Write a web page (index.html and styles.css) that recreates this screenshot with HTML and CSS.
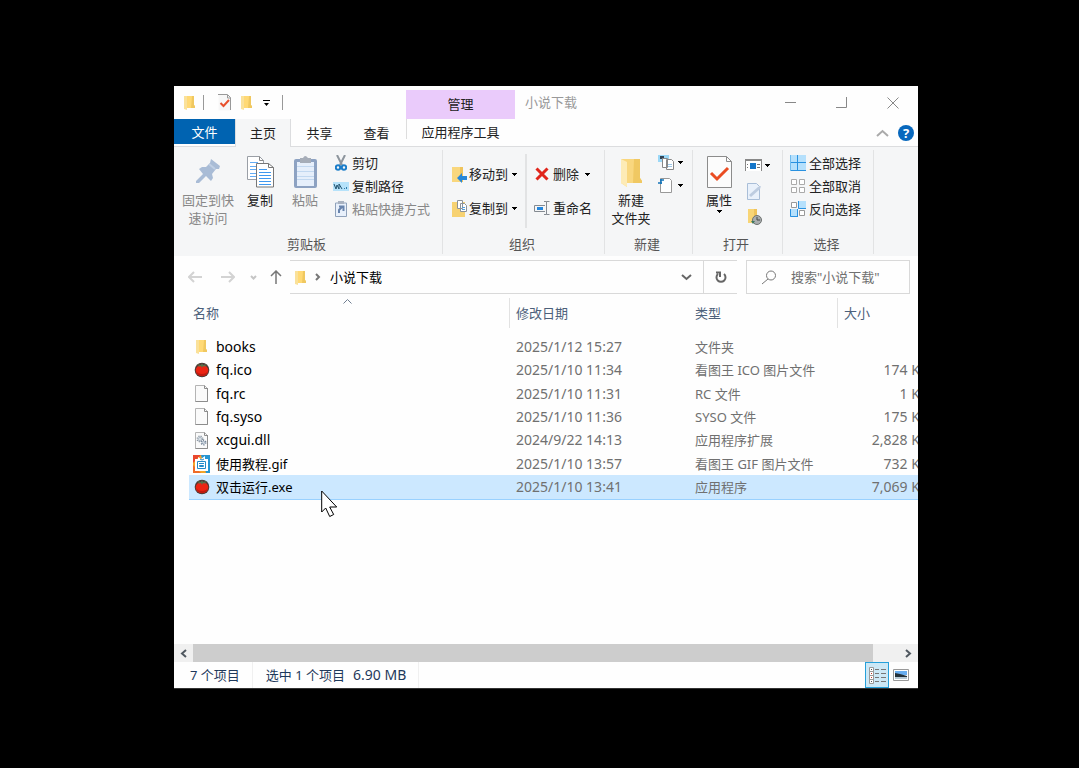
FILE: index.html
```html
<!DOCTYPE html>
<html lang="zh-CN">
<head>
<meta charset="utf-8">
<title>小说下载</title>
<link rel="stylesheet" href="styles.css">
</head>
<body>
<svg class="defs" aria-hidden="true">
  <symbol id="folder" viewBox="0 0 11 15"><path d="M0 1h10v9l1 1v2H3v2l-3-1z" fill="#fae19a"/><path d="M3 1h5v12H3z" fill="#ffd975"/><path d="M8 1h2v9l1 1v2H7z" fill="#f0c860"/></symbol>
  <symbol id="page" viewBox="0 0 13 17"><path d="M.5.5h9l3 3v13H.5z" fill="#fafafa" stroke="#b4b4b4"/><path d="M12.5 3v13.500H.5M9.500.5v3h3" fill="none" stroke="#8c8c8c"/></symbol>
  <symbol id="tomato" viewBox="0 0 16 16"><circle cx="8" cy="8" r="7.300" fill="#4d3936"/><ellipse cx="8" cy="8.500" rx="6.300" ry="5.800" fill="#ec2413"/><path d="M2 9q1 5 6 5t6-5q-2 3-6 3T2 9" fill="#bf1b10"/><path d="M8 1l1 2 4-1-2 2 1 1-3-1-1 2-1-2-3 1 1-1-2-2 4 1z" fill="#56724b"/></symbol>
  <symbol id="drop" viewBox="0 0 5 3"><path d="M0 0h5v1H4v1H3v1H2V2H1V1H0z" fill="#000"/></symbol>
</svg>
<main class="window">
  <header class="titlebar">
    <div class="quick">
      <svg class="folder-s"><use href="#folder"/></svg>
      <span class="bar"></span>
      <button class="plain q-check" aria-label="属性"><svg width="13" height="17" viewBox="0 0 13 17"><path d="M.5.5h9l3 3v13H.5z" fill="#f7f7f7"/><path d="M0 .5h9.500l3 3V16M9.500 1v3h3" fill="none" stroke="#999"/><path d="M2.500 9l3 3L11 6" fill="none" stroke="#e8502c" stroke-width="2"/></svg></button>
      <button class="plain q-folder" aria-label="新建文件夹"><svg class="folder-s"><use href="#folder"/></svg></button>
      <button class="plain q-more" aria-label="自定义快速访问工具栏"><svg width="7" height="6" viewBox="0 0 7 6"><path d="M0 0h7v1H0zM1 3h5L3.500 6z"/></svg></button>
      <span class="bar"></span>
    </div>
    <div class="context">管理</div>
    <h1>小说下载</h1>
    <div class="controls">
      <button class="plain" aria-label="最小化"><svg width="12" height="12"><path d="M0 5.500h11" stroke="#888"/></svg></button>
      <button class="plain" aria-label="最大化"><svg width="12" height="12"><path d="M10.500 0v10.500H0" fill="none" stroke="#888"/></svg></button>
      <button class="plain" aria-label="关闭"><svg width="12" height="12"><path d="M.5.5l11 11M11.500.5l-11 11" stroke="#888"/></svg></button>
    </div>
  </header>
  <nav class="tabs">
    <button class="tab file">文件</button>
    <button class="tab active">主页</button>
    <button class="tab">共享</button>
    <button class="tab">查看</button>
    <button class="tab tools">应用程序工具</button>
    <span class="tab-end">
      <button class="plain" aria-label="折叠功能区"><svg width="13" height="8"><path d="M1 7l5.500-5L12 7" fill="none" stroke="#aaa" stroke-width="2"/></svg></button>
      <button class="plain help" aria-label="帮助">?</button>
    </span>
  </nav>
  <section class="ribbon">
    <div class="group">
      <div class="tools-row clip">
        <button class="big pin off"><svg width="24" height="24" viewBox="0 0 24 24"><path d="M15 0l9 7-1 3-3 0-4 5 1 4-2 3-5-5-7 7-3 0 0-2 7-7-4-5 3-2 4 0 4-4z" fill="#a9bcd6"/><path d="M13 5l6 5" stroke="#c0cfe4" stroke-width="2"/></svg><span>固定到快<br>速访问</span></button>
        <button class="big"><svg width="27" height="32" viewBox="0 0 27 32"><path d="M.5.5h12l4 4v19H.5z" fill="#fff" stroke="#9a9fa6"/><path d="M12.500.5v4h4" fill="none" stroke="#888"/><path d="M3 6.500h8M3 10.500h7M3 13.500h7M3 17.500h7M3 20.500h7" stroke="#62acf5"/><path d="M9.500 7.500h12l5 4v19.500h-17z" fill="#fff" stroke="#777"/><path d="M21.500 7.500v4h5" fill="none" stroke="#777"/><path d="M12 13.500h8M12 16.500h12M12 19.500h12M12 22.500h12M12 25.500h12M12 28.500h12" stroke="#3f98ef"/></svg><span>复制</span></button>
        <button class="big paste off"><svg width="23" height="33" viewBox="0 0 23 33"><rect y="3" width="23" height="29" rx="2" fill="#8da2c2"/><path d="M3 6h17v24H3z" fill="#e6effb"/><path d="M6 2h3q2-4 5 0h3v5H6z" fill="#a6adb8"/><path d="M3 10.500h17M3 15.500h17M3 20.500h17M3 23.500h17" stroke="#c2d8f0"/></svg><span>粘贴</span></button>
        <div class="stack">
          <button class="small"><span class="ico"><svg width="12" height="16" viewBox="0 0 12 16"><path d="M2 0l5 10M10 0L5 10" stroke="#8d959d" stroke-width="2"/><circle cx="3" cy="12.500" r="2.200" fill="none" stroke="#1b7dc9" stroke-width="2"/><circle cx="9" cy="12.500" r="2.200" fill="none" stroke="#1b7dc9" stroke-width="2"/></svg></span>剪切</button>
          <button class="small"><span class="ico"><svg width="16" height="9" viewBox="0 0 16 9"><path d="M0 0h16v9H0z" fill="#b6e2fa"/><path d="M1 2l2 5 1-4 2 4V2l3 5" fill="none" stroke="#20526f"/><path d="M11 6h1v1h-1zM13 5h1v2h-1z" fill="#317caa"/></svg></span>复制路径</button>
          <button class="small off"><span class="ico"><svg width="12" height="16" viewBox="0 0 12 16"><path d="M.5 2h11v13.500H.5z" fill="#e8f0fb" stroke="#8fa1ba"/><path d="M3 0h6v3H3z" fill="#a9b2c0"/><path d="M4 12V9l3-3M4 5.500h4.500V10" fill="none" stroke="#6984ad" stroke-width="2"/></svg></span>粘贴快捷方式</button>
        </div>
      </div>
      <h2>剪贴板</h2>
    </div>
    <div class="group">
      <div class="tools-row organize">
        <div class="pair">
          <button class="small"><span class="ico"><svg width="16" height="17" viewBox="0 0 16 17"><path d="M0 1h11v15H0z" fill="#f9d77d"/><path d="M8 1h3v15H8z" fill="#efc45c"/><path d="M5 12l5-5v3h5v4h-5v3z" fill="#2687d9"/></svg></span>移动到<svg class="drop"><use href="#drop"/></svg></button>
          <button class="small"><span class="ico"><svg width="16" height="17" viewBox="0 0 16 17"><path d="M0 2h13v15H0z" fill="#f7d272"/><path d="M5.500.5h5v8h-5zM8.500 3.500h4l2 2v6h-6z" fill="#fff" stroke="#8c9299"/><path d="M10 7.500h3M10 9.500h3" stroke="#559eda"/></svg></span>复制到<svg class="drop"><use href="#drop"/></svg></button>
        </div>
        <div class="pair second">
          <button class="small"><span class="ico"><svg width="14" height="14" viewBox="0 0 14 14"><path d="M1.500 1.500l11 11M12.500 1.500l-11 11" stroke="#e0251b" stroke-width="3"/></svg></span>删除<svg class="drop"><use href="#drop"/></svg></button>
          <button class="small"><span class="ico"><svg width="16" height="15" viewBox="0 0 16 15"><path d="M11 4.500H.5v6H11M10 .5h2.500v13H10M15.500.5h-3M15.500 13.500h-3" fill="none" stroke="#848a91"/><path d="M3 6h6v3H3z" fill="#2587de"/></svg></span>重命名</button>
        </div>
      </div>
      <h2>组织</h2>
    </div>
    <div class="group">
      <div class="tools-row create">
        <button class="big"><svg width="21" height="30" viewBox="0 0 21 30"><path d="M0 1h19v19l2 3v2H6v4L0 25z" fill="#f9d77f"/><path d="M0 1l6 3v25L0 25z" fill="#fdebb6"/><path d="M13 1h6v19l2 3v2h-9z" fill="#f0c862"/></svg><span>新建<br>文件夹</span></button>
        <div class="icons">
          <button class="plain" aria-label="新建项目"><svg width="17" height="17" viewBox="0 0 17 17"><path d="M0 1h11v7H0z" fill="#9bd8f7"/><path d="M2 2h4v3H2z" fill="#345"/><path d="M4.500 4.500h5v9h-5zM8.500 5.500h5l2 2v8h-7z" fill="#fff" stroke="#888"/><path d="M10 10.500h4M10 12.500h4" stroke="#9cc7e9"/></svg><svg class="drop"><use href="#drop"/></svg></button>
          <button class="plain" aria-label="轻松访问"><svg width="17" height="17" viewBox="0 0 17 17"><path d="M2.500 1.500h9l2 2v12h-11z" fill="#fff" stroke="#999"/><path d="M0 6h4M2 3h4M3 2v5" stroke="#1675b9" stroke-width="1.500"/></svg><svg class="drop"><use href="#drop"/></svg></button>
        </div>
      </div>
      <h2>新建</h2>
    </div>
    <div class="group">
      <div class="tools-row open">
        <button class="big"><svg width="25" height="32" viewBox="0 0 25 32"><path d="M.5.5h19l5 5v26H.5z" fill="#fcfcfc" stroke="#8c8c8c"/><path d="M19.500.5v5h5" fill="none" stroke="#8c8c8c"/><path d="M4 17l6 6 11-11" fill="none" stroke="#ea4c22" stroke-width="3"/></svg><span>属性</span><svg class="drop"><use href="#drop"/></svg></button>
        <div class="icons">
          <button class="plain" aria-label="打开"><svg width="17" height="13" viewBox="0 0 17 13"><path d="M.5 12V.5h16V12" fill="#fff" stroke="#888"/><path d="M0 1h17" stroke="#888" stroke-width="2"/><path d="M5 4h6v6H5z" fill="#1576c9"/><path d="M2 5h1v1H2zM2 8h1v1H2zM12 5h3v1h-3zM12 8h3v1h-3z" fill="#777"/></svg><svg class="drop"><use href="#drop"/></svg></button>
          <button class="plain" aria-label="编辑"><svg width="17" height="17" viewBox="0 0 17 17"><path d="M2.500.5h9l3 3v13h-12z" fill="#e9f1fb" stroke="#a9bed8"/><path d="M4 12L13 4l3-1-1 3-9 8z" fill="#bdcce0"/></svg></button>
          <button class="plain" aria-label="历史记录"><svg width="17" height="17" viewBox="0 0 17 17"><path d="M3 0h9v14H3z" fill="#f8d576"/><path d="M9 0h3v14H9z" fill="#efc35b"/><circle cx="12" cy="11" r="4.500" fill="#a9adae" stroke="#6d7270"/><path d="M12 8v3h3" fill="none" stroke="#444a4a"/><path d="M6 12h4l-2 3z" fill="#3f7860"/></svg></button>
        </div>
      </div>
      <h2>打开</h2>
    </div>
    <div class="group">
      <div class="tools-row select">
        <div class="stack">
          <button class="small"><span class="ico"><svg width="16" height="16" viewBox="0 0 16 16"><path d="M0 0h16v16H0z" fill="#b5e0fc"/><path d="M0 7.500h16M7.500 0v16M0 15.500h16" stroke="#2991e0"/><path d="M.5 0v16" stroke="#70bbef"/></svg></span>全部选择</button>
          <button class="small"><span class="ico"><svg width="16" height="16" viewBox="0 0 16 16"><path d="M1.500 1.500h5v5h-5zM9.500 1.500h5v5h-5zM1.500 9.500h5v5h-5zM9.500 9.500h5v5h-5z" fill="#fff" stroke="#aaa"/></svg></span>全部取消</button>
          <button class="small"><span class="ico"><svg width="16" height="16" viewBox="0 0 16 16"><path d="M1.500 1.500h5v5h-5zM9.500 9.500h5v5h-5z" fill="#fff" stroke="#999"/><path d="M8 0h8v8H8zM0 8h8v8H0z" fill="#b5e0fc"/><path d="M8.500 0v7.500H16M.5 8v7.500H8M7.500 8v8" fill="none" stroke="#2991e0"/></svg></span>反向选择</button>
        </div>
      </div>
      <h2>选择</h2>
    </div>
  </section>
  <section class="navigate">
    <div class="arrows">
      <button class="plain" aria-label="后退"><svg width="14" height="12"><path d="M14 6H1M6 1L1 6l5 5" fill="none" stroke="#d3d3d3" stroke-width="2"/></svg></button>
      <button class="plain" aria-label="前进"><svg width="14" height="12"><path d="M0 6h13M8 1l5 5-5 5" fill="none" stroke="#d3d3d3" stroke-width="2"/></svg></button>
      <button class="plain" aria-label="最近位置"><svg width="7" height="5"><path d="M1 1l2.500 2.500L6 1" fill="none" stroke="#c5c5c5" stroke-width="2"/></svg></button>
      <button class="plain" aria-label="向上"><svg width="12" height="14"><path d="M6 14V1M1 6l5-5 5 5" fill="none" stroke="#777" stroke-width="1.500"/></svg></button>
    </div>
    <div class="address">
      <svg class="folder-s"><use href="#folder"/></svg>
      <svg width="6" height="8"><path d="M1 1l3 3-3 3" fill="none" stroke="#777" stroke-width="2"/></svg>
      <button class="plain crumb">小说下载</button>
      <button class="plain expand" aria-label="展开地址"><svg width="11" height="7"><path d="M1 1l4.500 4L10 1" fill="none" stroke="#666" stroke-width="2"/></svg></button>
      <button class="plain refresh" aria-label="刷新"><svg width="12" height="13" viewBox="0 0 12 13"><path d="M3 3a4.500 4.500 0 1 0 6 0M1 1.500h4V6" fill="none" stroke="#666" stroke-width="2"/></svg></button>
    </div>
    <label class="search"><svg width="15" height="15"><circle cx="9" cy="5.500" r="4.500" fill="none" stroke="#777"/><path d="M6 9l-6 5" stroke="#777"/></svg><input type="search" aria-label="搜索" placeholder='搜索"小说下载"'></label>
  </section>
  <section class="listing">
    <table>
      <colgroup><col><col class="c-date"><col class="c-type"><col class="c-size"></colgroup>
      <thead><tr><th><div>名称<svg class="sort" width="9" height="5"><path d="M.5 4.500l4-4 4 4" fill="none" stroke="#6f7e91"/></svg></div></th><th><div>修改日期</div></th><th><div>类型</div></th><th><div>大小</div></th></tr></thead>
      <tbody>
        <tr><td><span class="name latin"><span class="file-ico"><svg class="folder-s"><use href="#folder"/></svg></span>books</span></td><td>2025/1/12 15:27</td><td>文件夹</td><td></td></tr>
        <tr><td><span class="name latin"><span class="file-ico"><svg width="16" height="16"><use href="#tomato"/></svg></span>fq.ico</span></td><td>2025/1/10 11:34</td><td>看图王 ICO 图片文件</td><td>174 KB</td></tr>
        <tr><td><span class="name latin"><span class="file-ico"><svg width="13" height="17"><use href="#page"/></svg></span>fq.rc</span></td><td>2025/1/10 11:31</td><td>RC 文件</td><td>1 KB</td></tr>
        <tr><td><span class="name latin"><span class="file-ico"><svg width="13" height="17"><use href="#page"/></svg></span>fq.syso</span></td><td>2025/1/10 11:36</td><td>SYSO 文件</td><td>175 KB</td></tr>
        <tr><td><span class="name latin"><span class="file-ico"><svg width="13" height="17" viewBox="0 0 13 17"><use href="#page" width="13" height="17"/><circle cx="5" cy="7" r="2.500" fill="#d5dde5" stroke="#87929e" stroke-width="2" stroke-dasharray="1 1"/><circle cx="8.500" cy="10.500" r="2" fill="#d5dde5" stroke="#77879a" stroke-width="2" stroke-dasharray="1 1"/></svg></span>xcgui.dll</span></td><td>2024/9/22 14:13</td><td>应用程序扩展</td><td>2,828 KB</td></tr>
        <tr><td><span class="name"><span class="file-ico"><svg width="17" height="18" viewBox="0 0 17 18"><rect width="17" height="18" rx="1" fill="#f4a52a"/><path d="M0 0h8L0 8z" fill="#e9472d"/><path d="M8 0h9v18h-4z" fill="#2695d2"/><path d="M0 18v-8l8 8z" fill="#ef6c29"/><path d="M2 4h3V2l3 2 4-3v3h3v12H2z" fill="#fff"/><path d="M4.500 6.500h8v7h-8zM6 8.500h5M6.500 10.500h4v1h-4zM7 4l2 1 2-1" fill="none" stroke="#238bc9"/></svg></span>使用教程.gif</span></td><td>2025/1/10 13:57</td><td>看图王 GIF 图片文件</td><td>732 KB</td></tr>
        <tr class="selected"><td><span class="name"><span class="file-ico"><svg width="16" height="16"><use href="#tomato"/></svg></span>双击运行.exe</span></td><td>2025/1/10 13:41</td><td>应用程序</td><td>7,069 KB</td></tr>
      </tbody>
    </table>
    <svg class="cursor" width="18" height="28" viewBox="0 0 18 28"><path d="M.7 1v21l4-4 4 8.500 4-2-4-7.500h7z" fill="#fff" stroke="#000"/></svg>
  </section>
  <div class="scroll">
    <button class="plain" aria-label="向左滚动"><svg width="7" height="9"><path d="M6 1L2 4.500 6 8" fill="none" stroke="#505860" stroke-width="2"/></svg></button>
    <span class="thumb"></span>
    <button class="plain right" aria-label="向右滚动"><svg width="7" height="9"><path d="M1 1l4 3.500L1 8" fill="none" stroke="#505860" stroke-width="2"/></svg></button>
  </div>
  <footer class="status">
    <span class="cell">7 个项目</span>
    <span class="cell">选中 1 个项目<span class="bytes">6.90 MB</span></span>
    <div class="views">
      <button class="plain on" aria-label="详细信息"><svg width="17" height="17" viewBox="0 0 17 17"><path d="M.5.5h4v4h-4zM.5 4.500h4v4h-4zM.5 8.500h4v4h-4zM.5 12.500h4v4h-4z" fill="#fff" stroke="#999"/><path d="M2 2h1v1H2zM2 14h1v1H2z" fill="#555"/><path d="M2 6h1v1H2zM2 10h1v1H2z" fill="#c43a2b"/><path d="M6 2.500h4M12 2.500h5M6 6.500h4M12 6.500h5M6 10.500h4M12 10.500h5M6 14.500h4M12 14.500h5" stroke="#777"/></svg></button>
      <button class="plain" aria-label="大图标"><svg width="16" height="12" viewBox="0 0 16 12"><path d="M.5.5h15v11H.5z" fill="#fff" stroke="#999"/><path d="M2 2h12v4H2z" fill="#68adf0"/><path d="M2 4l5 1 7 2v1H2z" fill="#24313a"/><path d="M2 8h12v2H2z" fill="#b5c7d3"/></svg></button>
    </div>
  </footer>
</main>
</body>
</html>
```
FILE: styles.css
```css
* { box-sizing: border-box; }
body {
  margin: 0;
  min-height: 100vh;
  padding: 86px 161px 79px 174px;
  display: flex;
  background: #000;
  color: #222;
  font: 13px/18px "Noto Sans", "Noto Sans CJK SC", sans-serif;
}
.defs { display: none; }
svg { display: block; flex: none; }
button { font: inherit; color: inherit; border: 0; padding: 0; margin: 0; background: none; white-space: nowrap; }
.plain { display: flex; align-items: center; justify-content: center; }
h1, h2 { margin: 0; font: inherit; }
.folder-s { width: 11px; height: 15px; }
.drop { width: 5px; height: 3px; }

.window { flex: 1; min-width: 0; display: flex; flex-direction: column; background: #fefefe; overflow: hidden; border-bottom: 1px solid #333; }

.titlebar { height: 33px; display: flex; }
.quick { width: 232px; padding-left: 10px; display: flex; align-items: center; }
.bar { width: 1px; height: 15px; background: #999; margin-left: 8px; }
.q-check { margin-left: 14px; }
.q-folder { margin-left: 10px; }
.q-more { margin-left: 11px; margin-right: 4px; }
.context { width: 109px; margin-top: 4px; background: #eacbfb; text-align: center; line-height: 28px; }
.titlebar h1 { flex: 1; padding-left: 10px; line-height: 32px; color: #999; }
.controls { display: flex; }
.controls button { width: 51px; }

.tabs { height: 28px; display: flex; border-bottom: 1px solid #dcdddf; }
.tab { width: 57px; line-height: 26px; }
.file { width: 61px; margin-bottom: 2px; background: #0063b1; color: #fff; line-height: 24px; }
.active { width: 56px; background: #f5f6f7; border: 1px solid #dcdddf; border-width: 0 1px; margin-bottom: -1px; line-height: 27px; }
.tools { width: 108px; border-left: 1px solid #ddd; margin-left: 1px; margin-bottom: 7px; }
.tab-end { margin-left: auto; display: flex; align-items: center; gap: 9px; padding-right: 4px; }
.help { width: 16px; height: 16px; border-radius: 50%; background: #0868bd; color: #fff; font-weight: 700; line-height: 16px; }

.ribbon { height: 109px; display: grid; grid-template-columns: 269px 162px 88px 90px 91px 1fr; background: #f5f6f7; padding: 3px 0 2px; }
.group { border-right: 1px solid #e2e3e4; display: flex; flex-direction: column; }
.group h2 { margin-top: auto; height: 20px; line-height: 20px; padding-right: 3px; text-align: center; color: #555; }
.tools-row { display: flex; padding-top: 4px; }
.big { display: flex; flex-direction: column; align-items: center; width: 44px; padding-top: 2px; }
.big > span { margin-top: 3px; }
.big .drop { margin-top: 1px; }
.pin { width: 60px; padding-top: 5px; }
.pin > span { margin-top: 8px; }
.paste { width: 46px; }
.paste > span { margin-top: 2px; }
.off { color: #888; }
.clip { padding-left: 4px; }
.stack { display: grid; grid-auto-rows: 18px; row-gap: 5px; padding-left: 4px; }
.small { display: flex; align-items: center; gap: 3px; }
.small .drop { margin-left: 3px; }
.ico { width: 17px; display: flex; justify-content: center; }
.organize { padding-left: 8px; }
.pair { display: grid; grid-auto-rows: 18px; row-gap: 16px; padding: 11px 0; align-items: center; }
.pair .small { gap: 1px; }
.second { border-left: 2px solid #e2e3e4; margin-left: 8px; padding-left: 6px; }
.second .small { gap: 3px; }
.create { padding-left: 4px; }
.icons { display: flex; flex-direction: column; gap: 6px; padding: 0 0 0 5px; }
.icons .plain { gap: 3px; justify-content: flex-start; height: 17px; }
.create .big { padding-top: 4px; }
.open { padding-left: 4px; }
.open .icons { gap: 9px; padding-top: 3px; padding-left: 4px; }
.select .stack { padding-left: 6px; }

.navigate { height: 42px; display: flex; padding: 4px 8px 4px 0; }
.arrows { width: 116px; padding-left: 14px; display: flex; gap: 19px; }
.arrows button:nth-child(3) { margin-left: -4px; }
.arrows button:nth-child(4) { margin-left: -6px; }
.address { flex: 1; display: flex; align-items: center; border: 1px solid #d9d9d9; border-width: 1px 0; padding-left: 5px; gap: 9px; }
.crumb { color: #000; }
.expand { margin-left: auto; margin-right: 2px; }
.refresh { width: 34px; height: 100%; border-left: 1px solid #d9d9d9; }
.search { width: 164px; margin-left: 9px; border: 1px solid #d9d9d9; padding-left: 15px; display: flex; align-items: center; gap: 14px; }
.search input { border: 0; padding: 0; min-width: 0; flex: 1; font: inherit; background: none; outline: 0; }
.search input::placeholder { color: #707070; opacity: 1; }

.listing { flex: 1; position: relative; padding-left: 15px; }
table { width: calc(100% + 19px); height: 202px; table-layout: fixed; border-collapse: collapse; color: #707070; }
.c-date { width: 179px; }
.c-type { width: 149px; }
.c-size { width: 100px; }
th { height: 37px; padding: 0 0 7px; text-align: left; font-weight: 400; color: #4c607a; position: relative; }
th div { line-height: 30px; padding-left: 6px; border-left: 1px solid #e2e2e2; }
th:first-child div { padding-left: 4px; border: 0; }
th:nth-child(3) div { border-color: transparent; }
.sort { position: absolute; top: 1px; left: 154px; }
td { padding: 0 0 0 7px; white-space: nowrap; line-height: 18px; }
td:nth-child(2), td:nth-child(4), .latin { font-size: 14px; }
td:first-child { padding-left: 4px; color: #000; }
td:last-child { text-align: right; padding-right: 8px; }
.name { display: flex; align-items: center; gap: 6px; }
.file-ico { width: 17px; display: flex; justify-content: center; }
.selected td { background: #cce8ff; border-bottom: 1px solid #99d1ff; }
.cursor { position: absolute; left: 147px; top: 192px; }

.scroll { height: 18px; display: flex; background: #f0f0f0; }
.scroll button { width: 19px; }
.thumb { flex: 1; background: #cdcdcd; }
.scroll .right { width: 45px; padding-left: 25px; }

.status { height: 26px; display: flex; color: #1e395b; }
.cell { line-height: 26px; padding: 0 12px 0 16px; border-right: 1px solid #f0f0f0; }
.cell + .cell { padding-left: 13px; }
.bytes { font-size: 14px; margin-left: 8px; }
.views { margin-left: auto; display: flex; padding-right: 5px; }
.views button { width: 24px; }
.views .on { background: #cce8f6; border: 1px solid #26a0da; }
```
